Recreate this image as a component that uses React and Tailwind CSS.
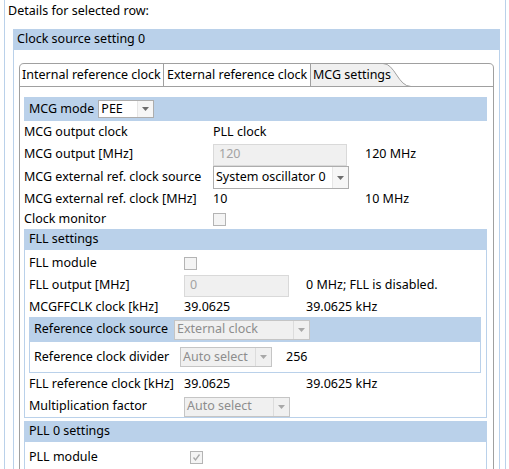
import React from "react";

const BLUE = "bg-[#bad1ea]";

function Arrow({ disabled }) {
  return (
    <svg width="7" height="4" viewBox="0 0 7 4">
      <path d="M0 0 H7 L3.5 4 Z" fill={disabled ? "#a8a8a8" : "#6d6d6d"} />
    </svg>
  );
}

function Select({ className, text, disabled }) {
  return (
    <div
      className={
        "flex items-stretch border " +
        (disabled ? "border-[#c5c5c5] bg-[#f0f0f0] text-[#8d8d8d] " : "border-[#adadad] bg-white text-black ") +
        className
      }
    >
      <div className="flex-1 flex items-center pl-[2px] overflow-hidden whitespace-nowrap">{text}</div>
      <div
        className={
          "w-[16px] flex items-center justify-center border-l " +
          (disabled ? "border-[#dcdcdc]" : "border-[#e6e6e6] bg-[#f6f6f6]")
        }
      >
        <Arrow disabled={disabled} />
      </div>
    </div>
  );
}

function Input({ className, text }) {
  return (
    <div className={"flex items-center pl-[5px] border border-[#d9d9d9] bg-[#f0f0f0] text-[#a3a3a3] " + className}>
      {text}
    </div>
  );
}

function Check({ checked }) {
  return (
    <div className="w-[13px] h-[13px] border border-[#b4b4b4] bg-[#f4f4f4] flex items-center justify-center">
      {checked && (
        <svg width="9" height="9" viewBox="0 0 9 9">
          <path d="M1.5 4.5 L3.5 7 L7.5 1.5" stroke="#a8a8a8" strokeWidth="1.3" fill="none" />
        </svg>
      )}
    </div>
  );
}

function Row({ h, label, value, extra, col1, col2 }) {
  return (
    <div className={"flex items-center whitespace-nowrap " + h}>
      <div className={"shrink-0 " + col1}>{label}</div>
      <div className={"shrink-0 flex items-center " + col2}>{value}</div>
      <div>{extra}</div>
    </div>
  );
}

function TabHeader() {
  return (
    <div className="relative h-[24px] w-[475px]">
      <svg className="absolute inset-0" width="475" height="24" viewBox="0 0 475 24">
        <path d="M292 1 H364 C376 1 379 23 392 23 H292 Z" fill="#f0f0f0" />
        <path
          d="M0.5 24 V5 Q0.5 0.5 5 0.5 H470 Q474.5 0.5 474.5 5 V24"
          stroke="#a0a0a0"
          fill="none"
        />
        <path d="M0 23.5 H475 M144.5 0 V23 M291.5 0 V23" stroke="#a0a0a0" fill="none" />
        <path d="M364 0.5 C376 0.5 379 23.5 392 23.5" stroke="#a0a0a0" fill="none" />
      </svg>
      <div className="relative flex h-full items-center whitespace-nowrap">
        <div className="w-[145px] pl-[3px]">Internal reference clock</div>
        <div className="w-[147px] pl-[3px]">External reference clock</div>
        <div className="pl-[2px]">MCG settings</div>
      </div>
    </div>
  );
}

export default function App() {
  const mc1 = "w-[189px]";
  const mc2 = "w-[152px]";
  const fc1 = "w-[155px]";
  const fc2 = "w-[122px]";
  return (
    <div className="w-[509px] h-[469px] bg-white overflow-hidden font-['Noto_Sans',sans-serif] text-[12.5px] text-black">
      <div className="ml-[4px] w-[502px] h-[469px] border-x border-[#bad1ea]">
        <div className="h-[29px] pl-[3px] pt-[1px] leading-[20px]">Details for selected row:</div>
        <div className="ml-[8px] w-[487px]">
          <div className={"h-[21px] flex items-center pl-[4px] " + BLUE}>Clock source setting 0</div>
          <div className="border-x border-[#bad1ea] pl-[5px] pt-[13px] h-[420px]">
            <TabHeader />
            <div className="w-[475px] h-[400px] border-x border-[#a0a0a0] pl-[4px] pt-[10px]">
              {/* MCG */}
              <div className="w-[463px]">
                <div className={"h-[24px] flex items-center pl-[5px] gap-[4px] " + BLUE}>
                  <span>MCG mode</span>
                  <Select className="w-[56px] h-[18px]" text="PEE" />
                </div>
                <Row h="h-[22px]" col1={mc1} col2={mc2} label="MCG output clock" value="PLL clock" />
                <Row
                  h="h-[23px]"
                  col1={mc1}
                  col2={mc2}
                  label="MCG output [MHz]"
                  value={<Input className="w-[134px] h-[22px]" text="120" />}
                  extra="120 MHz"
                />
                <Row
                  h="h-[23px]"
                  col1={mc1}
                  col2={mc2}
                  label="MCG external ref. clock source"
                  value={<Select className="w-[136px] h-[23px]" text="System oscillator 0" />}
                />
                <Row h="h-[20px]" col1={mc1} col2={mc2} label="MCG external ref. clock [MHz]" value="10" extra="10 MHz" />
                <Row h="h-[20px]" col1={mc1} col2={mc2} label="Clock monitor" value={<Check />} />
              </div>
              {/* FLL */}
              <div className="w-[463px] border-x border-b border-[#bad1ea]">
                <div className={"h-[21px] flex items-center pl-[4px] " + BLUE}>FLL settings</div>
                <div className="pl-[4px] pt-[3px]">
                  <Row h="h-[21px]" col1={fc1} col2={fc2} label="FLL module" value={<Check />} />
                  <Row
                    h="h-[23px]"
                    col1={fc1}
                    col2={fc2}
                    label="FLL output [MHz]"
                    value={<Input className="w-[105px] h-[22px]" text="0" />}
                    extra="0 MHz; FLL is disabled."
                  />
                  <Row h="h-[20px]" col1={fc1} col2={fc2} label="MCGFFCLK clock [kHz]" value="39.0625" extra="39.0625 kHz" />
                  <div className="w-[452px] border-x border-b border-[#bad1ea]">
                    <div className={"h-[25px] flex items-center pl-[4px] whitespace-nowrap " + BLUE}>
                      <div className="w-[140px]">Reference clock source</div>
                      <Select className="w-[136px] h-[20px]" text="External clock" disabled />
                    </div>
                    <div className="h-[30px] flex items-center pl-[4px] whitespace-nowrap">
                      <div className="w-[146px]">Reference clock divider</div>
                      <Select className="w-[92px] h-[20px]" text="Auto select" disabled />
                      <div className="ml-[14px]">256</div>
                    </div>
                  </div>
                  <Row h="h-[23px]" col1={fc1} col2={fc2} label="FLL reference clock [kHz]" value="39.0625" extra="39.0625 kHz" />
                  <Row
                    h="h-[21px]"
                    col1={fc1}
                    col2={fc2}
                    label="Multiplication factor"
                    value={<Select className="w-[106px] h-[20px]" text="Auto select" disabled />}
                  />
                </div>
              </div>
              {/* PLL */}
              <div className="w-[463px] mt-[3px] border-x border-[#bad1ea] h-[60px]">
                <div className={"h-[21px] flex items-center pl-[4px] " + BLUE}>PLL 0 settings</div>
                <div className="pl-[4px]">
                  <Row h="h-[30px]" col1="w-[161px]" col2={fc2} label="PLL module" value={<Check checked />} />
                </div>
              </div>
            </div>
          </div>
        </div>
      </div>
    </div>
  );
}
